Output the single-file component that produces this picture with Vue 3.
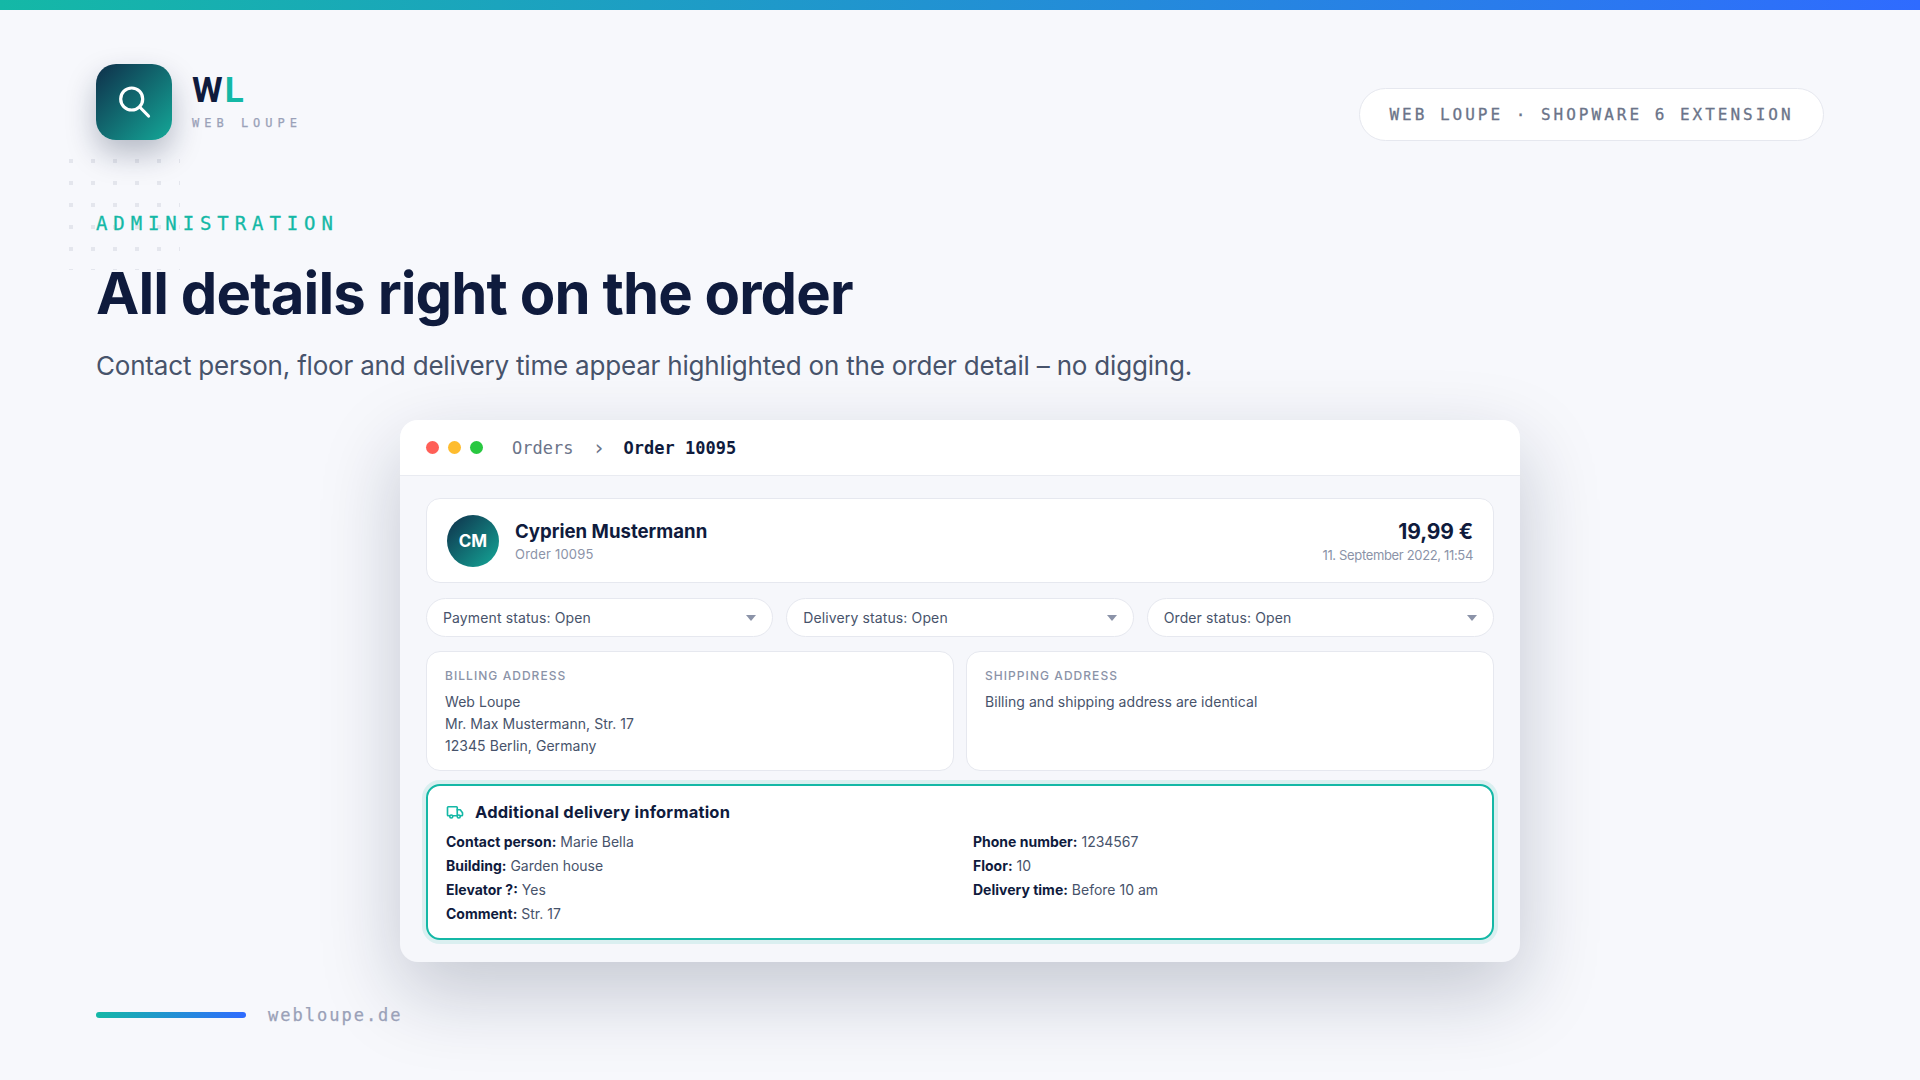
<template>
  <div class="page">
    <div class="topbar"></div>
    <svg class="dots" width="112" height="112" aria-hidden="true">
      <defs>
        <pattern id="dotgrid" width="22" height="22" patternUnits="userSpaceOnUse">
          <rect x="1" y="1" width="4" height="4" fill="#e4e6ed" />
        </pattern>
      </defs>
      <rect width="112" height="112" fill="url(#dotgrid)" />
    </svg>

    <header class="head">
      <div class="brand">
        <div class="tile">
          <svg width="36" height="36" viewBox="0 0 36 36" fill="none" stroke="#fff" stroke-width="3.2" stroke-linecap="round">
            <circle cx="15.7" cy="15" r="11" />
            <path d="M23.7 23 L32.5 32" />
          </svg>
        </div>
        <div class="brand-text">
          <div class="mark">W<span>L</span></div>
          <div class="sub-mark">WEB LOUPE</div>
        </div>
      </div>
      <div class="pill">WEB LOUPE · SHOPWARE 6 EXTENSION</div>
    </header>

    <section class="intro">
      <div class="eyebrow">ADMINISTRATION</div>
      <h1>All details right on the order</h1>
      <p>Contact person, floor and delivery time appear highlighted on the order detail – no digging.</p>
    </section>

    <main class="window">
      <div class="titlebar">
        <div class="lights">
          <i class="red"></i><i class="yellow"></i><i class="green"></i>
        </div>
        <span class="crumb">Orders</span>
        <span class="sep">›</span>
        <span class="crumb current">Order 10095</span>
      </div>
      <div class="body">
        <div class="card customer">
          <div class="avatar">CM</div>
          <div class="who">
            <div class="name">Cyprien Mustermann</div>
            <div class="meta">Order 10095</div>
          </div>
          <div class="total">
            <div class="price">19,99 €</div>
            <div class="meta date">11. September 2022, 11:54</div>
          </div>
        </div>

        <div class="statuses">
          <div v-for="s in statuses" :key="s" class="status">
            <span>{{ s }}</span>
            <i class="caret"></i>
          </div>
        </div>

        <div class="addresses">
          <div class="card address">
            <div class="label">BILLING ADDRESS</div>
            <div class="lines">Web Loupe<br />Mr. Max Mustermann, Str. 17<br />12345 Berlin, Germany</div>
          </div>
          <div class="card address">
            <div class="label">SHIPPING ADDRESS</div>
            <div class="lines">Billing and shipping address are identical</div>
          </div>
        </div>

        <div class="delivery">
          <div class="delivery-title">
            <svg width="18" height="18" viewBox="0 0 24 24" fill="none" stroke="#14b8a6" stroke-width="2.2" stroke-linecap="round" stroke-linejoin="round">
              <path d="M5 17H3a1 1 0 0 1-1-1V6a1 1 0 0 1 1-1h11a1 1 0 0 1 1 1v11H9" />
              <path d="M15 9h4l3 4v3a1 1 0 0 1-1 1h-2" />
              <circle cx="7" cy="18" r="2" />
              <circle cx="17" cy="18" r="2" />
            </svg>
            <span>Additional delivery information</span>
          </div>
          <div class="facts">
            <div v-for="f in facts" :key="f[0]" class="fact"><b>{{ f[0] }}:</b> {{ f[1] }}</div>
          </div>
        </div>
      </div>
    </main>

    <footer class="foot">
      <div class="foot-bar"></div>
      <span>webloupe.de</span>
    </footer>
  </div>
</template>

<script setup>
const statuses = ['Payment status: Open', 'Delivery status: Open', 'Order status: Open']

// links und rechts abwechselnd, wie im Grid
const facts = [
  ['Contact person', 'Marie Bella'],
  ['Phone number', '1234567'],
  ['Building', 'Garden house'],
  ['Floor', '10'],
  ['Elevator ?', 'Yes'],
  ['Delivery time', 'Before 10 am'],
  ['Comment', 'Str. 17']
]
</script>

<style>
html, body {
  margin: 0;
  background: #f7f8fc;
}
</style>

<style scoped>
.page {
  position: relative;
  width: 1920px;
  height: 1080px;
  overflow: hidden;
  background: #f7f8fc;
  font-family: Inter, "Noto Sans", sans-serif;
  color: #0f1b3d;
  display: flex;
  flex-direction: column;
}
.topbar {
  height: 10px;
  flex: none;
  background: linear-gradient(90deg, #14b8a6, #2f6bff);
}
.dots {
  position: absolute;
  left: 68px;
  top: 158px;
}
.head {
  display: flex;
  justify-content: space-between;
  padding: 54px 96px 0 96px;
  position: relative;
}
.brand {
  display: flex;
  gap: 20px;
}
.tile {
  width: 76px;
  height: 76px;
  border-radius: 20px;
  background: linear-gradient(135deg, #0f2f4a, #14a898);
  box-shadow: 0 14px 30px rgba(15, 27, 61, 0.28);
  display: flex;
  align-items: center;
  justify-content: center;
}
.mark {
  font-family: Roboto, sans-serif;
  font-weight: 700;
  font-size: 35px;
  line-height: 40px;
  margin-top: 7px;
  letter-spacing: 2px;
}
.mark span {
  color: #14b8a6;
}
.sub-mark {
  font-family: "DejaVu Sans Mono", monospace;
  font-size: 12px;
  letter-spacing: 5px;
  color: #9aa1b8;
  -webkit-text-stroke: 0.25px #9aa1b8;
  margin-top: 5px;
  white-space: pre;
}
.pill {
  margin-top: 24px;
  height: 53px;
  box-sizing: border-box;
  width: 465px;
  border: 1px solid #e6e8ef;
  border-radius: 27px;
  background: #fff;
  font-family: "DejaVu Sans Mono", monospace;
  font-size: 16px;
  letter-spacing: 3px;
  color: #6b7489;
  -webkit-text-stroke: 0.3px #6b7489;
  display: flex;
  align-items: center;
  justify-content: center;
  white-space: nowrap;
}
.intro {
  position: relative;
  padding: 0 96px;
  margin-top: 70px;
}
.eyebrow {
  font-family: "DejaVu Sans Mono", monospace;
  font-size: 19px;
  line-height: 24px;
  letter-spacing: 5.9px;
  color: #14b8a6;
  -webkit-text-stroke: 0.3px #14b8a6;
}
h1 {
  margin: 20px 0 0;
  font-size: 58px;
  line-height: 76px;
  font-weight: 700;
  letter-spacing: -0.9px;
}
.intro p {
  margin: 17px 0 0;
  font-size: 26px;
  line-height: 36px;
  letter-spacing: -0.19px;
  color: #47536b;
}
.window {
  position: relative;
  align-self: center;
  width: 1120px;
  margin-top: 36px;
  border-radius: 18px;
  overflow: hidden;
  background: #f6f7fb;
  box-shadow: 0 30px 80px rgba(15, 27, 61, 0.22);
}
.titlebar {
  height: 56px;
  box-sizing: border-box;
  background: #fff;
  border-bottom: 1px solid #e9ebf1;
  display: flex;
  align-items: center;
  padding: 0 26px;
  font-family: "DejaVu Sans Mono", monospace;
  font-size: 17px;
}
.lights {
  display: flex;
  gap: 9px;
  margin-right: 29px;
}
.lights i {
  width: 13px;
  height: 13px;
  border-radius: 50%;
}
.red { background: #ff5f57; }
.yellow { background: #febc2e; }
.green { background: #28c840; }
.crumb {
  color: #6b7489;
}
.crumb.current {
  color: #0f1b3d;
  font-weight: 700;
}
.sep {
  color: #6b7489;
  font-size: 21px;
  line-height: 24px;
  margin: 0 18.5px 0 19px;
}
.body {
  padding: 22px 26px;
  display: flex;
  flex-direction: column;
  gap: 14px;
}
.card {
  background: #fff;
  border: 1px solid #e6e8ef;
  border-radius: 14px;
  box-sizing: border-box;
}
.customer {
  height: 85px;
  margin-bottom: 1px;
  display: flex;
  align-items: center;
  padding: 0 20px;
  gap: 16px;
}
.avatar {
  width: 52px;
  height: 52px;
  border-radius: 50%;
  background: linear-gradient(135deg, #0f2f4a, #14a898);
  color: #fff;
  font-weight: 700;
  font-size: 17px;
  display: flex;
  align-items: center;
  justify-content: center;
}
.who {
  flex: 1;
  margin-top: 1px;
}
.name {
  font-size: 18.6px;
  line-height: 24px;
  font-weight: 700;
}
.price {
  font-size: 21px;
  line-height: 24px;
  font-weight: 700;
  letter-spacing: -0.1px;
}
.meta {
  font-size: 13px;
  line-height: 18px;
  margin-top: 2px;
  letter-spacing: 0.2px;
  color: #8b93a8;
}
.meta.date {
  letter-spacing: -0.34px;
}
.total {
  text-align: right;
  margin-top: 2px;
}
.statuses {
  display: grid;
  grid-template-columns: repeat(3, 1fr);
  gap: 13px;
}
.status {
  height: 39px;
  box-sizing: border-box;
  background: #fff;
  border: 1px solid #e6e8ef;
  border-radius: 20px;
  padding: 0 16px;
  display: flex;
  align-items: center;
  justify-content: space-between;
  font-size: 14px;
  letter-spacing: 0.12px;
  color: #47536b;
}
.caret {
  width: 0;
  height: 0;
  border-left: 5px solid transparent;
  border-right: 5px solid transparent;
  border-top: 6px solid #8b93a8;
}
.addresses {
  display: grid;
  grid-template-columns: 1fr 1fr;
  gap: 12px;
  margin-bottom: -1px;
}
.address {
  height: 120px;
  padding: 16px 18px;
}
.label {
  font-size: 12px;
  line-height: 16px;
  letter-spacing: 1.05px;
  font-weight: 500;
  color: #8b93a8;
}
.lines {
  margin-top: 7px;
  font-size: 14px;
  line-height: 22px;
  letter-spacing: 0.05px;
  color: #47536b;
}
.delivery {
  height: 156px;
  box-sizing: border-box;
  background: #fff;
  border: 2px solid #14b8a6;
  border-radius: 14px;
  box-shadow: 0 0 0 4px rgba(20, 184, 166, 0.12);
  padding: 15px 18px;
}
.delivery-title {
  display: flex;
  align-items: center;
  gap: 11px;
  font-size: 16.5px;
  line-height: 22px;
  letter-spacing: 0.2px;
  font-weight: 700;
}
.facts {
  display: grid;
  grid-template-columns: 527px 1fr;
  margin-top: 7px;
}
.fact {
  font-size: 14px;
  line-height: 24px;
  color: #47536b;
}
.fact b {
  color: #0f1b3d;
  font-weight: 700;
}
.foot {
  position: relative;
  display: flex;
  align-items: center;
  gap: 22px;
  padding-left: 96px;
  margin-top: 43px;
  font-family: "DejaVu Sans Mono", monospace;
  font-size: 17px;
  letter-spacing: 2px;
  color: #9aa1b8;
  -webkit-text-stroke: 0.25px #9aa1b8;
}
.foot-bar {
  width: 150px;
  height: 6px;
  border-radius: 3px;
  background: linear-gradient(90deg, #14b8a6, #2f6bff);
}
</style>
